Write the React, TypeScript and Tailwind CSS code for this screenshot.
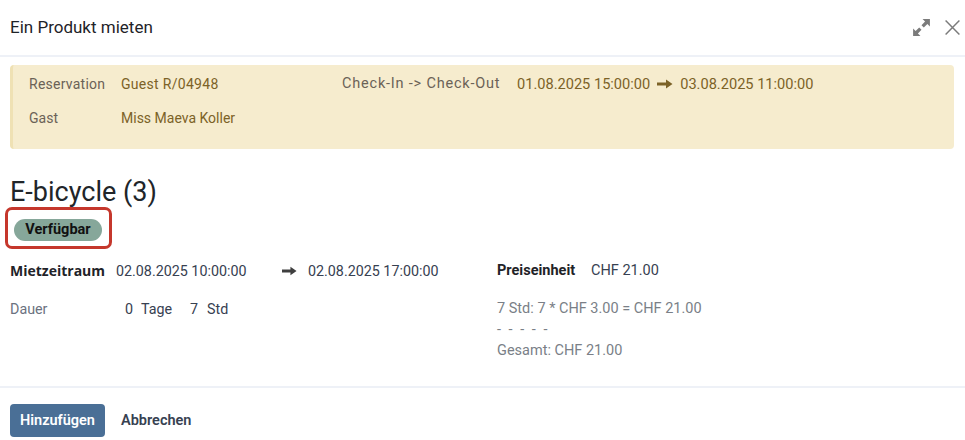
// Rental dialog – "Ein Produkt mieten"

const LongArrow = ({ className }: { className?: string }) => (
  <svg viewBox="0 0 16 10" className={className} fill="currentColor">
    <path d="M0 3.5h9V0.5L15.5 5 9 9.5V6.5H0z" />
  </svg>
);

function Header() {
  return (
    <div className="flex h-[57px] items-center justify-between border-b-2 border-[#eef1f7] pl-[10px] pr-[4px]">
      <h1 className="text-[17px] text-[#1f2328]">Ein Produkt mieten</h1>
      <div className="flex items-center gap-[12px] text-[#7b7b7b]">
        {/* expand */}
        <svg viewBox="0 0 20 20" className="h-[21px] w-[21px]" fill="currentColor">
          <path d="M11 2h7v7l-2.4-2.4-3.4 3.4-2.2-2.2 3.4-3.4z" />
          <path d="M9 18H2v-7l2.4 2.4 3.4-3.4 2.2 2.2-3.4 3.4z" />
        </svg>
        {/* close */}
        <svg viewBox="0 0 16 16" className="h-[17px] w-[17px]" fill="none" stroke="currentColor" strokeWidth="1.4">
          <path d="M1.5 1.5l13 13M14.5 1.5l-13 13" />
        </svg>
      </div>
    </div>
  );
}

function ReservationBox() {
  return (
    <div className="rounded-[4px] border-l-[3px] border-[#efe1b4] bg-[#f6ecce] pb-[21px] pl-[16px] pt-[9px] text-[14px] leading-[20px]">
      <div className="flex">
        <span className="w-[92px] tracking-[0.25px] text-[#6b6257]">Reservation</span>
        <span className="w-[221px] tracking-[0.3px] text-[#7c6227]">Guest R/04948</span>
        <span className="w-[175px] text-[14.5px] tracking-[0.8px] text-[#6b6257]">Check-In -&gt; Check-Out</span>
        <span className="flex items-center gap-[7px] text-[14.6px] text-[#7c6227]">
          01.08.2025 15:00:00
          <LongArrow className="h-[10px] w-[16px] text-[#7c6227]" />
          03.08.2025 11:00:00
        </span>
      </div>
      <div className="mt-[14px] flex">
        <span className="w-[92px] text-[#6b6257]">Gast</span>
        <span className="text-[#7c6227]">Miss Maeva Koller</span>
      </div>
    </div>
  );
}

export default function App() {
  return (
    <div className="h-[440px] w-[965px] overflow-hidden bg-white font-['Roboto',sans-serif] text-[#374151]">
      <Header />

      <div className="border-b-2 border-[#eef1f7] pb-[24px] pl-[10px] pr-[11px] pt-[8px]">
        <ReservationBox />

        <h2 className="mt-[27px] text-[27px] leading-[32px] text-[#212529]">E-bicycle (3)</h2>

        {/* highlighted status badge */}
        <div className="-ml-[5px] -mt-[1px] inline-block rounded-[7px] border-[3px] border-[#c5372c] pb-[5px] pl-[6px] pr-[7px] pt-[9px]">
          <span className="flex h-[22px] w-[88px] items-center justify-center rounded-full bg-[#86a79a] text-[14.5px] font-bold text-[#111]">
            Verfügbar
          </span>
        </div>

        <div className="mt-[12px] flex text-[14.3px] leading-[20px]">
          {/* left column */}
          <div className="w-[487px]">
            <div className="flex items-center">
              <span className="w-[106px] font-['Open_Sans',sans-serif] text-[14px] font-bold text-[#1f2328]">
                Mietzeitraum
              </span>
              <span className="w-[166px]">02.08.2025 10:00:00</span>
              <LongArrow className="h-[10px] w-[15px] text-[#3f3f3f]" />
              <span className="ml-[11px]">02.08.2025 17:00:00</span>
            </div>
            <div className="mt-[18px] flex items-center">
              <span className="w-[115px] text-[#6b7280]">Dauer</span>
              <span className="w-[16px]">0</span>
              <span className="w-[49px]">Tage</span>
              <span className="w-[17px]">7</span>
              <span>Std</span>
            </div>
          </div>

          {/* right column */}
          <div className="text-[14.5px]">
            <div className="flex items-center">
              <span className="w-[94px] font-bold text-[#1f2328]">Preiseinheit</span>
              <span>CHF 21.00</span>
            </div>
            <div className="mt-[18px] text-[#7a7f87]">
              <div className="h-[21px]">7 Std: 7 * CHF 3.00 = CHF 21.00</div>
              <div className="h-[21px] tracking-[2px]">- - - - -</div>
              <div className="h-[21px]">Gesamt: CHF 21.00</div>
            </div>
          </div>
        </div>
      </div>

      <div className="flex items-center gap-[16px] px-[10px] pt-[16px]">
        <button className="h-[33px] w-[95px] rounded-[4px] bg-[#4a6f96] text-[14.5px] font-semibold text-white">
          Hinzufügen
        </button>
        <button className="text-[14.5px] font-semibold text-[#374151]">Abbrechen</button>
      </div>
    </div>
  );
}
